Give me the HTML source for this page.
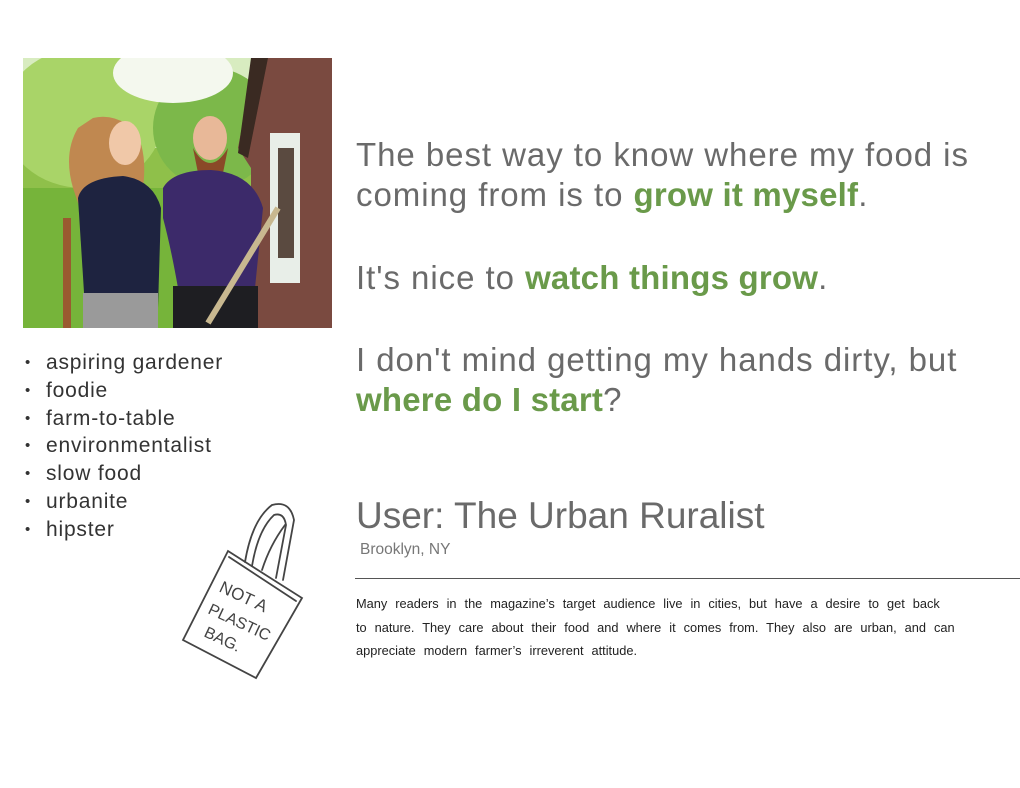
<!DOCTYPE html>
<html><head><meta charset="utf-8"><style>
body{margin:0;width:1020px;height:788px;background:#fff;position:relative;overflow:hidden;font-family:"Liberation Sans",sans-serif;}
.q{position:absolute;left:356px;font-weight:normal;font-size:33px;color:#6a6a6a;letter-spacing:0.95px;line-height:40px;white-space:nowrap}
.g{color:#6a9a4a;font-weight:bold;letter-spacing:0.2px}
ul{position:absolute;left:25px;top:349px;margin:0;padding:0;list-style:none;font-size:21px;letter-spacing:0.8px;color:#333;line-height:27.8px}
ul li:before{content:"•";display:inline-block;width:21px;font-size:15px;vertical-align:2px}
p{position:absolute;left:356px;top:592px;margin:0;font-size:12.8px;line-height:23.5px;color:#222;width:640px;word-spacing:4.4px;white-space:nowrap}
</style></head><body>
<svg style="position:absolute;left:23px;top:58px" width="309" height="270" viewBox="0 0 309 270">
<rect width="309" height="270" fill="#8fc04a"/>
<rect width="309" height="90" fill="#d8ecc0"/>
<ellipse cx="60" cy="60" rx="80" ry="70" fill="#a9d468"/>
<ellipse cx="190" cy="70" rx="60" ry="60" fill="#7cb84a"/>
<ellipse cx="150" cy="15" rx="60" ry="30" fill="#f4f8ee"/>
<rect y="130" width="309" height="140" fill="#76b43a"/>
<polygon points="232,0 309,0 309,270 228,270 228,110 215,90" fill="#7a4a40"/>
<polygon points="228,0 245,0 225,100 215,95" fill="#3a2a22"/>
<rect x="247" y="75" width="30" height="150" fill="#e8eee8"/>
<rect x="255" y="90" width="16" height="110" fill="#5a4a40"/>
<path d="M55,70 Q40,95 50,130 L60,160 L120,130 Q125,90 110,70 Q90,55 70,60Z" fill="#c08850"/>
<ellipse cx="102" cy="85" rx="16" ry="22" fill="#f0c8a8"/>
<path d="M55,140 Q60,120 100,118 Q130,122 138,150 L135,250 L62,250Z" fill="#1e2340"/>
<rect x="60" y="235" width="75" height="35" fill="#9a9a9a"/>
<ellipse cx="187" cy="80" rx="17" ry="22" fill="#e8b898"/>
<path d="M170,90 Q187,120 205,90 L200,115 L175,115Z" fill="#8a4a28"/>
<path d="M140,130 Q150,112 188,112 Q230,115 240,150 L232,230 L155,230 Q148,190 140,160Z" fill="#3c2a6a"/>
<rect x="150" y="228" width="85" height="42" fill="#1e1e22"/>
<rect x="40" y="160" width="8" height="110" fill="#9a5a30"/>
<line x1="185" y1="265" x2="255" y2="150" stroke="#c8b890" stroke-width="6"/>
</svg>
<ul><li>aspiring gardener</li><li>foodie</li><li>farm-to-table</li><li>environmentalist</li><li>slow food</li><li>urbanite</li><li>hipster</li></ul>
<svg style="position:absolute;left:170px;top:490px" width="150" height="200" viewBox="170 490 150 200" fill="none" stroke="#444" stroke-width="1.8" stroke-linecap="round">
<path d="M228,551 L302,598 L256,678 L183,640 Z"/>
<path d="M229,557 L296,601"/>
<path d="M245,562 Q252,520 272,505 Q290,500 294,520 L283,580"/>
<path d="M252,566 Q258,530 274,515 Q284,512 286,525 L276,578"/>
<path d="M262,570 Q270,545 285,525"/>
<text x="218" y="592" fill="#444" stroke="none" font-size="17" transform="rotate(25 220 592)" font-family="Liberation Sans">NOT A</text>
<text x="207" y="613" fill="#444" stroke="none" font-size="16" transform="rotate(25 207 613)" font-family="Liberation Sans">PLASTIC</text>
<text x="203" y="636" fill="#444" stroke="none" font-size="16" transform="rotate(25 203 636)" font-family="Liberation Sans">BAG.</text>
</svg>
<div class="q" style="top:135px">The best way to know where my food is<br>coming from is to <span class="g">grow it myself</span>.</div>
<div class="q" style="top:258px">It's nice to <span class="g">watch things grow</span>.</div>
<div class="q" style="top:340px">I don't mind getting my hands dirty, but<br><span class="g">where do I start</span>?</div>
<div class="q" style="top:496px;font-size:37px;letter-spacing:0">User: The Urban Ruralist</div>
<div style="position:absolute;left:360px;top:541px;font-size:15.5px;color:#777">Brooklyn, NY</div>
<div style="position:absolute;left:355px;top:578px;width:665px;height:1px;background:#555"></div>
<p>Many readers in the magazine’s target audience live in cities, but have a desire to get back<br>to nature. They care about their food and where it comes from. They also are urban, and can<br>appreciate modern farmer’s irreverent attitude.</p>
</body></html>
